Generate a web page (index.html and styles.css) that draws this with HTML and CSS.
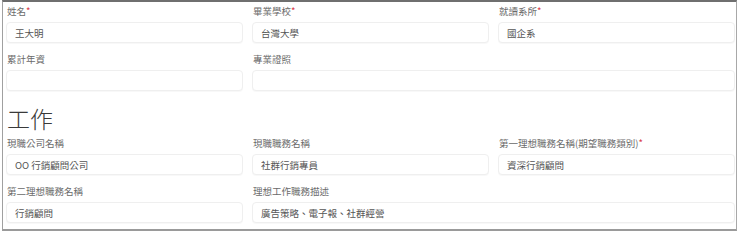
FILE: index.html
```html
<!DOCTYPE html>
<html lang="zh-Hant">
<head>
    <meta charset="UTF-8">
    <meta name="viewport" content="width=device-width, initial-scale=1.0">
    <title>履歷表單</title>
    <link rel="stylesheet" href="styles.css">
</head>
<body>
    <div class="frame">
        <div class="form-grid">
            <div class="field">
                <label class="label">姓名<span class="req">*</span></label>
                <input class="input" type="text" value="王大明">
            </div>
            <div class="field">
                <label class="label">畢業學校<span class="req">*</span></label>
                <input class="input" type="text" value="台灣大學">
            </div>
            <div class="field">
                <label class="label">就讀系所<span class="req">*</span></label>
                <input class="input" type="text" value="國企系">
            </div>
            <div class="field">
                <label class="label">累計年資</label>
                <input class="input" type="text" value="">
            </div>
            <div class="field wide">
                <label class="label">專業證照</label>
                <input class="input" type="text" value="">
            </div>
        </div>

        <h2 class="section-title">工作</h2>

        <div class="form-grid">
            <div class="field">
                <label class="label">現職公司名稱</label>
                <input class="input" type="text" value="OO 行銷顧問公司">
            </div>
            <div class="field">
                <label class="label">現職職務名稱</label>
                <input class="input" type="text" value="社群行銷專員">
            </div>
            <div class="field">
                <label class="label">第一理想職務名稱(期望職務類別)<span class="req">*</span></label>
                <input class="input" type="text" value="資深行銷顧問">
            </div>
            <div class="field">
                <label class="label">第二理想職務名稱</label>
                <input class="input" type="text" value="行銷顧問">
            </div>
            <div class="field wide">
                <label class="label">理想工作職務描述</label>
                <input class="input" type="text" value="廣告策略、電子報、社群經營">
            </div>
        </div>
    </div>
</body>
</html>
```

FILE: styles.css
```css
* {
    margin: 0;
    padding: 0;
    box-sizing: border-box;
}

body {
    font-family: "Noto Sans CJK TC", "Noto Sans", sans-serif;
    background: #ffffff;
    width: 740px;
    height: 235px;
    overflow: hidden;
}

.frame {
    margin-left: 2px;
    width: 735px;
    height: 231px;
    border-top: 2px solid #6f6f6f;
    border-left: 1px solid #a0a0a0;
    border-right: 1px solid #a8a8a8;
    border-bottom: 2px solid #9a9a9a;
    padding: 3px 1px 0 3px;
    background: #ffffff;
}

.form-grid {
    display: grid;
    grid-template-columns: repeat(3, 237px);
    column-gap: 9px;
}

.field {
    display: flex;
    flex-direction: column;
    margin-bottom: 10px;
}

.field.wide {
    grid-column: span 2;
}

.label {
    font-size: 9.5px;
    line-height: 12px;
    height: 12px;
    color: #6a6a6a;
    padding-left: 1px;
    margin-bottom: 5px;
    white-space: nowrap;
}

.req {
    color: #d9343f;
}

.input {
    height: 21px;
    border: 1px solid #efefef;
    border-radius: 4px;
    background: #ffffff;
    padding: 0 8px;
    font-family: "Noto Sans CJK TC", "Noto Sans", sans-serif;
    font-size: 9.5px;
    color: #555555;
    outline: none;
    box-shadow: 0 1px 1px rgba(0, 0, 0, 0.03);
}

.section-title {
    font-size: 23px;
    font-weight: 300;
    line-height: 30px;
    height: 30px;
    color: #3a3a3a;
    margin: 2px 0 4px 1px;
}
```
